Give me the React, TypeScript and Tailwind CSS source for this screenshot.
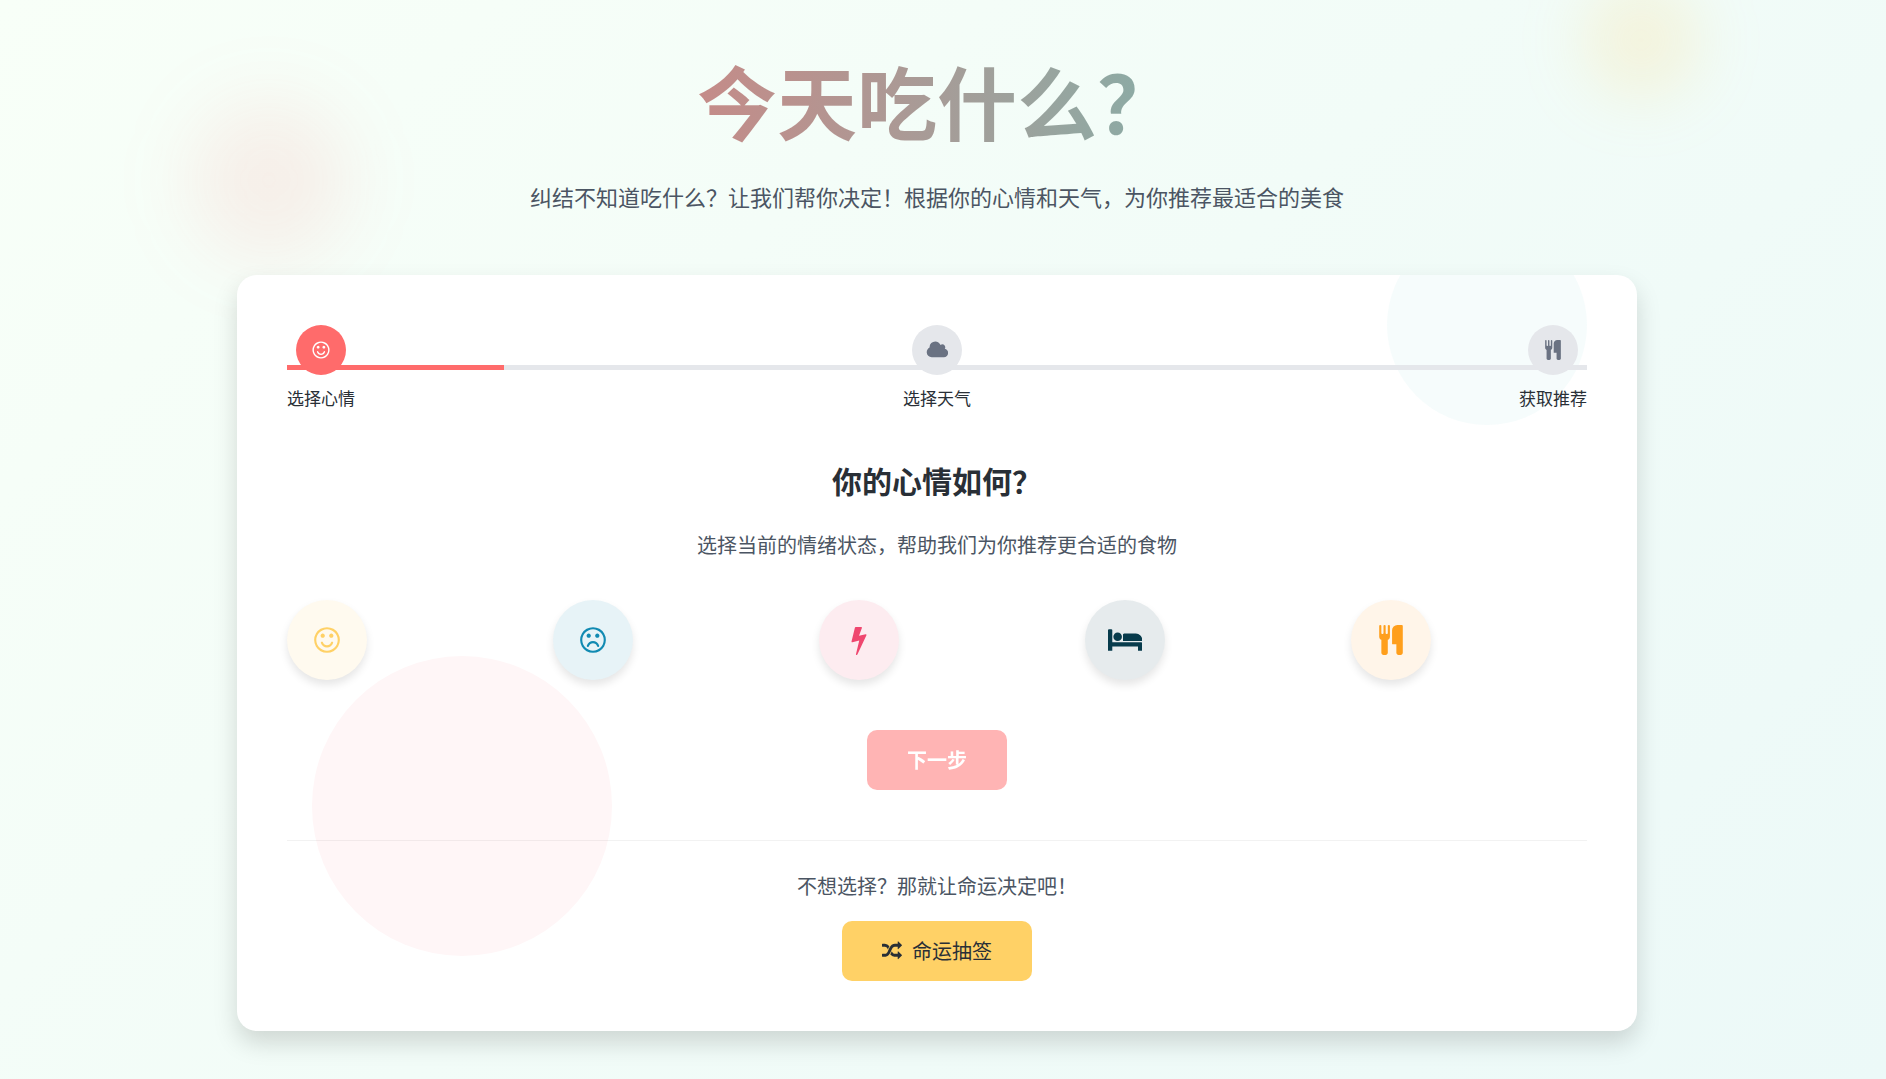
import { useState } from "react";

type IconName = "smile" | "frown" | "bolt" | "bed" | "cutlery" | "cloud" | "random";

const FACE =
  "zm-494-435q0 53-37.5 90.5t-90.5 37.5-90.5-37.5-37.5-90.5 37.5-90.5 90.5-37.5 90.5 37.5 37.5 90.5zm512 0q0 53-37.5 90.5t-90.5 37.5-90.5-37.5-37.5-90.5 37.5-90.5 90.5-37.5 90.5 37.5 37.5 90.5zm256 256q0-130-51-248.5t-136.5-204-204-136.5-248.5-51-248.5 51-204 136.5-136.5 204-51 248.5 51 248.5 136.5 204 204 136.5 248.5 51 248.5-51 204-136.5 136.5-204 51-248.5zm128 0q0 209-103 385.5t-279.5 279.5-385.5 103-385.5-103-279.5-279.5-103-385.5 103-385.5 279.5-279.5 385.5-103 385.5 103 279.5 279.5 103 385.5z";

const ICONS: Record<IconName, { w: number; d: string }> = {
  smile: {
    w: 1792,
    d:
      "M1262 1075q-37 121-138 195t-228 74-228-74-138-195q-8-25 4-48.5t38-31.5q25-8 48.5 4t31.5 38q25 80 92.5 129.5t151.5 49.5 151.5-49.5 92.5-129.5q8-26 32-38t49-4 37 31.5 4 48.5" +
      FACE,
  },
  frown: {
    w: 1792,
    d:
      "M1262 1229q8 25-4 48.5t-37 31.5-49-4-32-38q-25-80-92.5-129.5t-151.5-49.5-151.5 49.5-92.5 129.5q-8 26-31.5 38t-48.5 4q-26-8-38-31.5t-4-48.5q37-121 138-195t228-74 228 74 138 195" +
      FACE.replace("zm-494-435", "zm-494-589"),
  },
  bolt: {
    w: 1792,
    d: "M1333 566q18 20 7 44l-540 1157q-13 25-42 25-4 0-14-2-17-5-25.5-19t-4.5-30l197-808-406 101q-4 1-12 1-18 0-31-11-18-15-13-39l201-825q4-16 18-26t32-10h328q19 0 32 12.5t13 29.5q0 8-5 18l-171 463 396-98q8-2 12-2 19 0 34 15z",
  },
  bed: {
    w: 2048,
    d: "M256 1024h1728q26 0 45 19t19 45v448h-256v-256h-1536v256h-256v-1216q0-26 19-45t45-19h128q26 0 45 19t19 45v704zm576-320q0-106-75-181t-181-75-181 75-75 181 75 181 181 75 181-75 75-181zm1216 256v-64q0-159-112.5-271.5t-271.5-112.5h-704q-26 0-45 19t-19 45v384h1152z",
  },
  cutlery: {
    w: 1792,
    d: "M832 64v640q0 61-35.5 111t-92.5 70v779q0 52-38 90t-90 38h-128q-52 0-90-38t-38-90v-779q-57-20-92.5-70t-35.5-111v-640q0-26 19-45t45-19 45 19 19 45v416q0 26 19 45t45 19 45-19 19-45v-416q0-26 19-45t45-19 45 19 19 45v416q0 26 19 45t45 19 45-19 19-45v-416q0-26 19-45t45-19 45 19 19 45zm768 0v1600q0 52-38 90t-90 38h-128q-52 0-90-38t-38-90v-512h-224q-13 0-22.5-9.5t-9.5-22.5v-800q0-132 94-226t226-94h256q26 0 45 19t19 45z",
  },
  cloud: {
    w: 2048,
    d: "M1984 1152q0 159-112.5 271.5t-271.5 112.5h-1088q-185 0-316.5-131.5t-131.5-316.5q0-132 71-241.5t187-163.5q-2-28-2-43 0-212 150-362t362-150q158 0 286.5 88t187.5 230q70-62 166-62 106 0 181 75t75 181q0 75-41 138 129 30 213 134.5t84 239.5z",
  },
  random: {
    w: 1792,
    d: "M666 481q-60 92-137 273-22-45-37-72.5t-40.5-63.5-51-56.5-63-35-81.5-14.5h-224q-14 0-23-9t-9-23v-192q0-14 9-23t23-9h224q250 0 410 225zm1126 799q0 14-9 23l-320 320q-9 9-23 9-13 0-22.5-9.5t-9.5-22.5v-192q-32 0-85 .5t-81 1-73-1-71-5-64-10.5-63-18.5-58-28.5-59-40-55-53.5-56-69.5q59-93 136-273 22 45 37 72.5t40.5 63.5 51 56.5 63 35 81.5 14.5h256v-192q0-14 9-23t23-9q12 0 24 10l319 319q9 9 9 23zm0-896q0 14-9 23l-320 320q-9 9-23 9-13 0-22.5-9.5t-9.5-22.5v-192h-256q-48 0-87 15t-69 45-51 61.5-45 77.5q-32 62-78 171-29 66-49.5 111t-54 105-64 100-74 83-90 68.5-106.5 42-128 16.5h-224q-14 0-23-9t-9-23v-192q0-14 9-23t23-9h224q48 0 87-15t69-45 51-61.5 45-77.5q32-62 78-171 29-66 49.5-111t54-105 64-100 74-83 90-68.5 106.5-42 128-16.5h256v-192q0-14 9-23t23-9q12 0 24 10l319 319q9 9 9 23z",
  },
};

function Icon({ name, className }: { name: IconName; className: string }) {
  const icon = ICONS[name];
  return (
    <svg
      viewBox={`0 0 ${icon.w} 1792`}
      className={`w-auto fill-current ${className}`}
      aria-hidden="true"
    >
      <path d={icon.d} />
    </svg>
  );
}

const steps: { label: string; icon: IconName }[] = [
  { label: "选择心情", icon: "smile" },
  { label: "选择天气", icon: "cloud" },
  { label: "获取推荐", icon: "cutlery" },
];

const moods: { id: string; label: string; icon: IconName; color: string }[] = [
  { id: "happy", label: "开心", icon: "smile", color: "bg-[#fffaef] text-[#ffd166]" },
  { id: "sad", label: "难过", icon: "frown", color: "bg-[#e7f3f7] text-[#118ab2]" },
  { id: "angry", label: "生气", icon: "bolt", color: "bg-[#fdecf0] text-[#ef476f]" },
  { id: "tired", label: "疲惫", icon: "bed", color: "bg-[#e6ebed] text-[#073b4c]" },
  { id: "hungry", label: "饥饿", icon: "cutlery", color: "bg-[#fff5e9] text-[#ff9f1c]" },
];

export default function App() {
  const [mood, setMood] = useState<string | null>(null);
  const current = 0;
  const progress = ((current + 0.5) / steps.length) * 100;

  return (
    <div className="relative min-h-screen overflow-hidden bg-linear-135/srgb from-[#f8fff8] to-[#ecf9f8] px-6 pt-11 pr-9 pb-12 font-['Noto_Sans_CJK_SC',sans-serif] text-[#292f36]">
      <div className="absolute top-[100px] left-[10%] size-40 rounded-full bg-[#ff6b6b]/10 blur-[36px]" />
      <div className="absolute -top-4 right-[10%] size-28 rounded-full bg-[#ffd166]/20 blur-[32px]" />

      <div className="relative mx-auto max-w-[1400px]">
        <header className="mb-[61px] text-center">
          <h1 className="bg-linear-to-r/srgb from-[#ff6b6b] to-[#4ecdc4] bg-clip-text text-[80px] leading-[110px] font-bold text-transparent">
            今天吃什么？
          </h1>
          <p className="mt-6 text-[22px] leading-9 text-[#4b5563]">
            纠结不知道吃什么？让我们帮你决定！根据你的心情和天气，为你推荐最适合的美食
          </p>
        </header>

        <main className="relative overflow-hidden rounded-[20px] bg-white p-[50px] shadow-[0_12px_25px_rgba(0,0,0,0.15)]">
          <div className="absolute -top-[50px] right-[50px] size-[200px] rounded-full bg-[#4ecdc4]/5" />
          <div className="absolute bottom-[75px] left-[75px] size-[300px] rounded-full bg-[#fff6f7]" />

          <div className="relative">
            <div className="absolute inset-x-0 top-10 h-[5px] bg-gray-200">
              <div className="h-full bg-[#ff6b6b]" style={{ width: `${progress}%` }} />
            </div>
            <ol className="relative flex justify-between">
              {steps.map((step, i) => (
                <li key={step.label} className="flex flex-col items-center">
                  <div
                    className={`flex size-[50px] items-center justify-center rounded-full ${
                      i === current ? "bg-[#ff6b6b] text-white" : "bg-gray-200 text-gray-500"
                    }`}
                  >
                    <Icon name={step.icon} className="h-5" />
                  </div>
                  <span className="mt-2.5 text-[17px] leading-[26px]">{step.label}</span>
                </li>
              ))}
            </ol>
          </div>

          <section className="relative mt-[50px] text-center">
            <h2 className="text-[30px] leading-[39px] font-bold">你的心情如何？</h2>
            <p className="mt-[30px] text-xl leading-[30px] text-[#4b5563]">
              选择当前的情绪状态，帮助我们为你推荐更合适的食物
            </p>
            <div className="mt-10 grid grid-cols-5 gap-[30px]">
              {moods.map((m) => (
                <button
                  key={m.id}
                  type="button"
                  aria-label={m.label}
                  aria-pressed={mood === m.id}
                  onClick={() => setMood(m.id)}
                  className={`flex size-20 items-center justify-center rounded-full shadow-[0_5px_8px_rgba(0,0,0,0.1)] ${m.color}`}
                >
                  <Icon name={m.icon} className="h-[30px]" />
                </button>
              ))}
            </div>
            <button
              type="button"
              disabled={!mood}
              className="mt-[50px] h-[60px] rounded-[10px] bg-[#ff6b6b] px-10 text-xl font-bold text-white disabled:opacity-50"
            >
              下一步
            </button>
          </section>

          <section className="relative mt-[50px] border-t border-black/5 pt-[30px] text-center">
            <p className="text-xl leading-[30px] text-[#4b5563]">不想选择？那就让命运决定吧！</p>
            <button
              type="button"
              className="mx-auto mt-5 flex h-[60px] items-center gap-2.5 rounded-[10px] bg-[#ffd166] px-10 text-xl"
            >
              <Icon name="random" className="h-5" />
              命运抽签
            </button>
          </section>
        </main>
      </div>
    </div>
  );
}
